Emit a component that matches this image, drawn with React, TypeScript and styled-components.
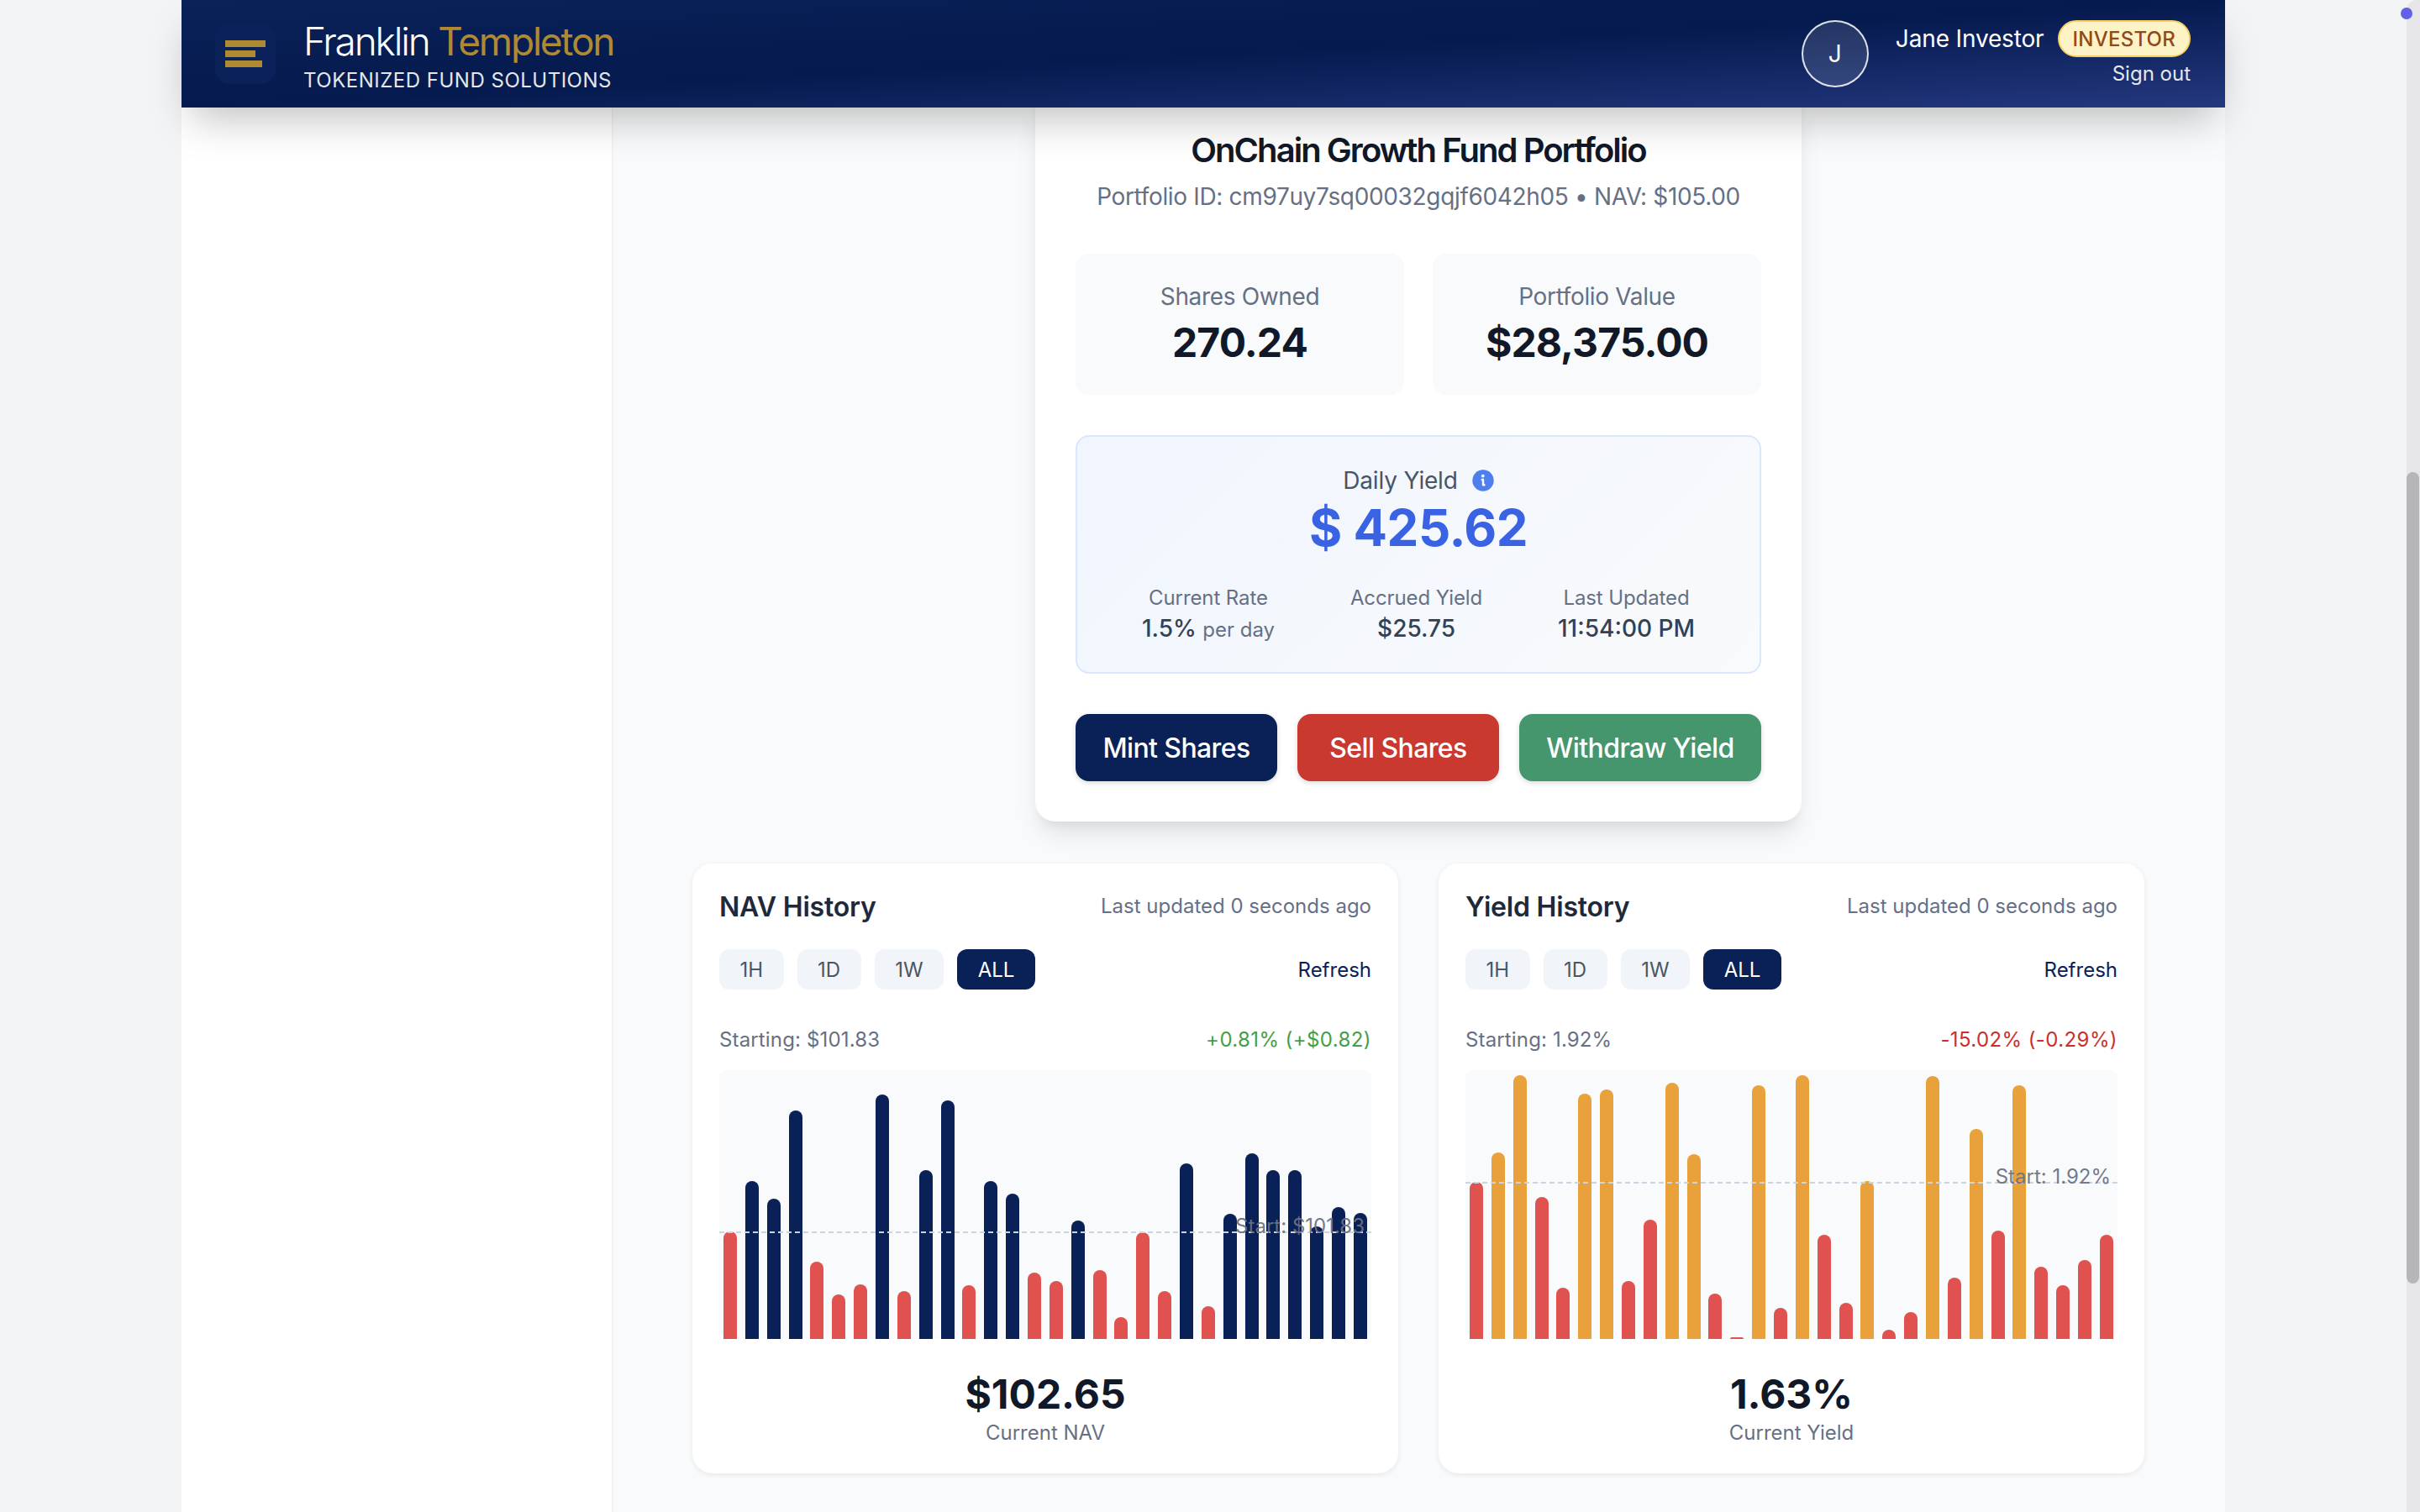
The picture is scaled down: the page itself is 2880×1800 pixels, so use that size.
import React from 'react';
import styled, { createGlobalStyle } from 'styled-components';

const GlobalStyle = createGlobalStyle`
  html, body {
    margin: 0;
    padding: 0;
    background: #f3f4f6;
    font-family: Inter, "Liberation Sans", sans-serif;
  }
  * { box-sizing: border-box; }
`;

const Page = styled.div`
  position: relative;
  height: 1800px;
  width: 2880px;
  padding-right: 16px;
  overflow: hidden;
`;

const ScrollTrack = styled.div`
  position: absolute;
  top: 0;
  right: 0;
  bottom: 0;
  width: 16px;
  background: #e6e6e8;
  border-top-left-radius: 12px;
`;

const ScrollThumb = styled.div`
  position: absolute;
  top: 562px;
  left: 0;
  width: 15px;
  height: 966px;
  background: #b6b6b8;
  border-radius: 8px;
`;

const NotifyDot = styled.div`
  position: absolute;
  top: 9px;
  right: 9px;
  width: 14px;
  height: 14px;
  border-radius: 50%;
  background: #6160e8;
`;

const Frame = styled.div`
  width: 2432px;
  margin: 0 auto;
  background: #f9fafb;
`;

const Header = styled.header`
  position: relative;
  z-index: 10;
  height: 128px;
  padding: 0 41px 0 40px;
  display: flex;
  align-items: center;
  justify-content: space-between;
  background: linear-gradient(to bottom right, #0a2259 0%, #051a4e 50%, #24387f 100%);
  box-shadow: 0 25px 50px -12px rgba(0, 0, 0, 0.25);
`;

const Brand = styled.div`
  display: flex;
  align-items: center;
  gap: 33px;
`;

const LogoTile = styled.div`
  width: 72px;
  height: 72px;
  border-radius: 18px;
  background: #0a2259;
  padding: 20px 12px;
  display: flex;
  flex-direction: column;
  gap: 4px;
`;

const LogoBar = styled.span<{ $w: number }>`
  display: block;
  height: 8px;
  width: ${p => p.$w}px;
  background: #b08a33;
`;

const BrandText = styled.div`
  display: flex;
  flex-direction: column;
  gap: 3px;
  margin-top: 5px;
`;

const BrandName = styled.div`
  font-size: 46px;
  line-height: 56px;
  font-weight: 300;
  letter-spacing: -2.2px;
  color: #fff;
`;

const Gold = styled.span`
  color: #b08a33;
  font-weight: 400;
`;

const BrandTag = styled.div`
  font-size: 24px;
  line-height: 32px;
  letter-spacing: 0.5px;
  color: #e5e7eb;
`;

const UserArea = styled.div`
  display: flex;
  align-items: center;
  gap: 32px;
`;

const Avatar = styled.div`
  width: 80px;
  height: 80px;
  border-radius: 50%;
  border: 2px solid rgba(255, 255, 255, 0.85);
  background: rgba(255, 255, 255, 0.12);
  color: #fff;
  font-size: 28px;
  display: flex;
  align-items: center;
  justify-content: center;
`;

const UserInfo = styled.div`
  display: flex;
  flex-direction: column;
  align-items: flex-end;
  gap: 2px;
  margin-top: 2px;
`;

const UserTop = styled.div`
  display: flex;
  align-items: center;
  gap: 16px;
`;

const UserName = styled.span`
  font-size: 28px;
  font-weight: 400;
  letter-spacing: -0.15px;
  color: #fff;
`;

const RoleBadge = styled.span`
  height: 44px;
  padding: 0 16px;
  display: flex;
  align-items: center;
  border: 2px solid #f5cf5f;
  border-radius: 22px;
  background: #fef3c7;
  color: #8f4a1c;
  font-size: 24px;
  font-weight: 500;
  letter-spacing: 0.01em;
`;

const SignOut = styled.span`
  font-size: 24px;
  line-height: 36px;
  color: #e5e7eb;
`;

const Body = styled.div`
  display: flex;
  height: 1672px;
`;

const Sidebar = styled.aside`
  width: 514px;
  flex: none;
  background: #fff;
  border-right: 2px solid #f1f2f4;
`;

const Main = styled.main`
  flex: 1;
  padding: 0 96px 0 94px;
  display: flex;
  flex-direction: column;
  align-items: center;
`;

const PortfolioCard = styled.section`
  width: 912px;
  margin-top: -27px;
  padding: 48px;
  background: #fff;
  border-radius: 24px;
  box-shadow: 0 20px 30px -6px rgba(0, 0, 0, 0.1), 0 8px 12px -4px rgba(0, 0, 0, 0.05);
`;

const Title = styled.h1`
  margin: 0;
  text-align: center;
  font-size: 40px;
  line-height: 60px;
  font-weight: 600;
  letter-spacing: -1.95px;
  color: #111827;
`;

const Subtitle = styled.p`
  margin: 5px 0 48px;
  text-align: center;
  font-size: 28px;
  line-height: 40px;
  letter-spacing: -0.34px;
  color: #667085;
`;

const StatGrid = styled.div`
  display: grid;
  grid-template-columns: 1fr 1fr;
  gap: 34px;
  margin-bottom: 48px;
`;

const StatTile = styled.div`
  height: 168px;
  padding: 31px 0;
  text-align: center;
  background: #f9fafb;
  border-radius: 16px;
`;

const StatLabel = styled.div`
  font-size: 28px;
  line-height: 40px;
  letter-spacing: -0.35px;
  color: #667085;
`;

const StatValue = styled.div`
  margin-top: 3px;
  font-size: 48px;
  line-height: 64px;
  font-weight: 700;
  letter-spacing: -0.9px;
  color: #111827;
`;

const YieldBox = styled.div`
  padding: 32px 32px 30px;
  margin-bottom: 48px;
  border: 2px solid #dbe7fb;
  border-radius: 16px;
  background: linear-gradient(135deg, #f0f5fe, #f9fafb);
  text-align: center;
`;

const YieldLabel = styled.div`
  display: flex;
  align-items: center;
  justify-content: center;
  gap: 17px;
  font-size: 28px;
  line-height: 40px;
  letter-spacing: -0.2px;
  color: #475569;
`;

const InfoIcon = styled.svg`
  width: 26px;
  height: 26px;
  display: block;
`;

const YieldValue = styled.div`
  font-size: 60px;
  line-height: 72px;
  font-weight: 700;
  letter-spacing: -0.5px;
  color: #3a63e4;
`;

const YieldColumns = styled.div`
  display: flex;
  justify-content: space-around;
  margin-top: 32px;
`;

const YieldCol = styled.div`
  text-align: center;
`;

const ColLabel = styled.div`
  font-size: 24px;
  line-height: 32px;
  letter-spacing: -0.1px;
  color: #667085;
`;

const ColValue = styled.div`
  font-size: 28px;
  line-height: 40px;
  font-weight: 500;
  color: #334155;
`;

const ColUnit = styled.span`
  font-size: 24px;
  font-weight: 400;
  color: #667085;
`;

const ButtonRow = styled.div`
  display: flex;
  justify-content: space-between;
`;

const ActionButton = styled.button<{ $bg: string; $w: number }>`
  width: ${p => p.$w}px;
  height: 80px;
  padding: 0;
  border: 0;
  border-radius: 16px;
  background: ${p => p.$bg};
  color: #fff;
  font-family: inherit;
  font-size: 32px;
  font-weight: 500;
  letter-spacing: -0.6px;
  box-shadow: 0 2px 6px rgba(0, 0, 0, 0.15);
`;

const ChartGrid = styled.div`
  width: 100%;
  margin-top: 50px;
  display: grid;
  grid-template-columns: 1fr 1fr;
  gap: 48px;
`;

const ChartCard = styled.section`
  height: 726px;
  padding: 24px 32px;
  background: #fff;
  border-radius: 24px;
  box-shadow: 0 2px 6px rgba(15, 23, 42, 0.08);
`;

const SplitRow = styled.div`
  display: flex;
  align-items: center;
  justify-content: space-between;
`;

const ChartHead = styled(SplitRow)`
  height: 54px;
  margin-bottom: 24px;
`;

const ChartTitle = styled.h2`
  margin: 0;
  font-size: 32px;
  font-weight: 600;
  letter-spacing: -0.2px;
  color: #1e293b;
`;

const Muted = styled.span`
  font-size: 24px;
  line-height: 32px;
  letter-spacing: 0.15px;
  color: #667085;
`;

const UpdatedNote = styled(Muted)`
  letter-spacing: 0;
`;

const RangeGroup = styled.div`
  display: flex;
  gap: 16px;
`;

const RangeButton = styled.button<{ $active?: boolean }>`
  height: 48px;
  padding: 0 24.5px;
  border: 0;
  border-radius: 12px;
  background: ${p => (p.$active ? '#0a2158' : '#f1f5f9')};
  color: ${p => (p.$active ? '#fff' : '#4b5563')};
  font-family: inherit;
  font-size: 24px;
`;

const RefreshLink = styled.span`
  font-size: 24px;
  font-weight: 400;
  color: #0a2158;
`;

const StartRow = styled(SplitRow)`
  margin-top: 44px;
  margin-bottom: 20px;
`;

const Delta = styled.span<{ $up: boolean }>`
  font-size: 24px;
  line-height: 32px;
  letter-spacing: 0.4px;
  color: ${p => (p.$up ? '#43a047' : '#c9302c')};
`;

const Chart = styled.div`
  position: relative;
  height: 320px;
  padding: 0 5px;
  display: flex;
  align-items: flex-end;
  justify-content: space-between;
  background: #f9fafb;
  border-radius: 8px;
`;

const Bar = styled.div<{ $color: string }>`
  width: 16px;
  background: ${p => p.$color};
  border-radius: 8px 8px 0 0;
`;

const StartLine = styled.div`
  position: absolute;
  left: 0;
  right: 0;
  border-top: 2px dashed #cbd5e1;
`;

const StartLabel = styled.span`
  position: absolute;
  right: 8px;
  bottom: -8px;
  font-size: 24px;
  line-height: 32px;
  color: rgba(107, 114, 128, 0.95);
`;

const ChartFoot = styled.div`
  margin-top: 38px;
  text-align: center;
`;

const FootValue = styled.div`
  font-size: 48px;
  line-height: 56px;
  font-weight: 700;
  color: #111827;
`;

const FootLabel = styled.div`
  margin-top: 2px;
  font-size: 24px;
  line-height: 32px;
  color: #667085;
`;

const NAVY = '#0a2158';
const RED = '#e0524f';
const ORANGE = '#e9a23b';

const navBars: [number, string][] = [
  [128, RED], [188, NAVY], [167, NAVY], [272, NAVY], [92, RED], [53, RED], [65, RED], [291, NAVY],
  [57, RED], [201, NAVY], [284, NAVY], [64, RED], [188, NAVY], [173, NAVY], [79, RED], [69, RED],
  [141, NAVY], [82, RED], [26, RED], [127, RED], [57, RED], [209, NAVY], [39, RED], [149, NAVY],
  [221, NAVY], [201, NAVY], [201, NAVY], [134, NAVY], [157, NAVY], [150, NAVY],
];

const yieldBars: [number, string][] = [
  [187, RED], [222, ORANGE], [314, ORANGE], [169, RED], [61, RED], [292, ORANGE], [297, ORANGE], [69, RED],
  [142, RED], [305, ORANGE], [220, ORANGE], [54, RED], [2, RED], [302, ORANGE], [37, RED], [314, ORANGE],
  [124, RED], [43, RED], [188, ORANGE], [11, RED], [32, RED], [313, ORANGE], [73, RED], [250, ORANGE],
  [129, RED], [302, ORANGE], [86, RED], [64, RED], [94, RED], [124, RED],
];

type HistoryProps = {
  title: string;
  starting: string;
  delta: string;
  up: boolean;
  bars: [number, string][];
  lineTop: number;
  startLabel: string;
  value: string;
  valueLabel: string;
};

const HistoryCard = ({ title, starting, delta, up, bars, lineTop, startLabel, value, valueLabel }: HistoryProps) => (
  <ChartCard>
    <ChartHead>
      <ChartTitle>{title}</ChartTitle>
      <UpdatedNote>Last updated 0 seconds ago</UpdatedNote>
    </ChartHead>
    <SplitRow>
      <RangeGroup>
        <RangeButton>1H</RangeButton>
        <RangeButton>1D</RangeButton>
        <RangeButton>1W</RangeButton>
        <RangeButton $active>ALL</RangeButton>
      </RangeGroup>
      <RefreshLink>Refresh</RefreshLink>
    </SplitRow>
    <StartRow>
      <Muted>Starting: {starting}</Muted>
      <Delta $up={up}>{delta}</Delta>
    </StartRow>
    <Chart>
      {bars.map(([h, color], i) => (
        <Bar key={i} $color={color} style={{ height: h }} />
      ))}
      <StartLine style={{ top: lineTop }}>
        <StartLabel>{startLabel}</StartLabel>
      </StartLine>
    </Chart>
    <ChartFoot>
      <FootValue>{value}</FootValue>
      <FootLabel>{valueLabel}</FootLabel>
    </ChartFoot>
  </ChartCard>
);

export default function App() {
  return (
    <Page>
      <GlobalStyle />
      <Frame>
        <Header>
          <Brand>
            <LogoTile>
              <LogoBar $w={48} />
              <LogoBar $w={36} />
              <LogoBar $w={44} />
            </LogoTile>
            <BrandText>
              <BrandName>
                Franklin <Gold>Templeton</Gold>
              </BrandName>
              <BrandTag>TOKENIZED FUND SOLUTIONS</BrandTag>
            </BrandText>
          </Brand>
          <UserArea>
            <Avatar>J</Avatar>
            <UserInfo>
              <UserTop>
                <UserName>Jane Investor</UserName>
                <RoleBadge>INVESTOR</RoleBadge>
              </UserTop>
              <SignOut>Sign out</SignOut>
            </UserInfo>
          </UserArea>
        </Header>
        <Body>
          <Sidebar />
          <Main>
            <PortfolioCard>
              <Title>OnChain Growth Fund Portfolio</Title>
              <Subtitle>Portfolio ID: cm97uy7sq00032gqjf6042h05 • NAV: $105.00</Subtitle>
              <StatGrid>
                <StatTile>
                  <StatLabel>Shares Owned</StatLabel>
                  <StatValue>270.24</StatValue>
                </StatTile>
                <StatTile>
                  <StatLabel>Portfolio Value</StatLabel>
                  <StatValue>$28,375.00</StatValue>
                </StatTile>
              </StatGrid>
              <YieldBox>
                <YieldLabel>
                  Daily Yield
                  <InfoIcon viewBox="0 0 26 26">
                    <circle cx="13" cy="13" r="12.7" fill="#4f7fee" />
                    <circle cx="12.8" cy="7.6" r="1.9" fill="#fff" />
                    <path d="M10.8 12 H13 V18.2 H15.4" fill="none" stroke="#fff" strokeWidth="2.4" strokeLinejoin="round" />
                  </InfoIcon>
                </YieldLabel>
                <YieldValue>$ 425.62</YieldValue>
                <YieldColumns>
                  <YieldCol>
                    <ColLabel>Current Rate</ColLabel>
                    <ColValue>
                      1.5% <ColUnit>per day</ColUnit>
                    </ColValue>
                  </YieldCol>
                  <YieldCol>
                    <ColLabel>Accrued Yield</ColLabel>
                    <ColValue>$25.75</ColValue>
                  </YieldCol>
                  <YieldCol>
                    <ColLabel>Last Updated</ColLabel>
                    <ColValue>11:54:00 PM</ColValue>
                  </YieldCol>
                </YieldColumns>
              </YieldBox>
              <ButtonRow>
                <ActionButton $bg="#0a2158" $w={240}>Mint Shares</ActionButton>
                <ActionButton $bg="#c9392f" $w={240}>Sell Shares</ActionButton>
                <ActionButton $bg="#45956d" $w={288}>Withdraw Yield</ActionButton>
              </ButtonRow>
            </PortfolioCard>
            <ChartGrid>
              <HistoryCard
                title="NAV History"
                starting="$101.83"
                delta="+0.81% (+$0.82)"
                up
                bars={navBars}
                lineTop={192}
                startLabel="Start: $101.83"
                value="$102.65"
                valueLabel="Current NAV"
              />
              <HistoryCard
                title="Yield History"
                starting="1.92%"
                delta="-15.02% (-0.29%)"
                up={false}
                bars={yieldBars}
                lineTop={133}
                startLabel="Start: 1.92%"
                value="1.63%"
                valueLabel="Current Yield"
              />
            </ChartGrid>
          </Main>
        </Body>
      </Frame>
      <ScrollTrack>
        <ScrollThumb />
      </ScrollTrack>
      <NotifyDot />
    </Page>
  );
}
